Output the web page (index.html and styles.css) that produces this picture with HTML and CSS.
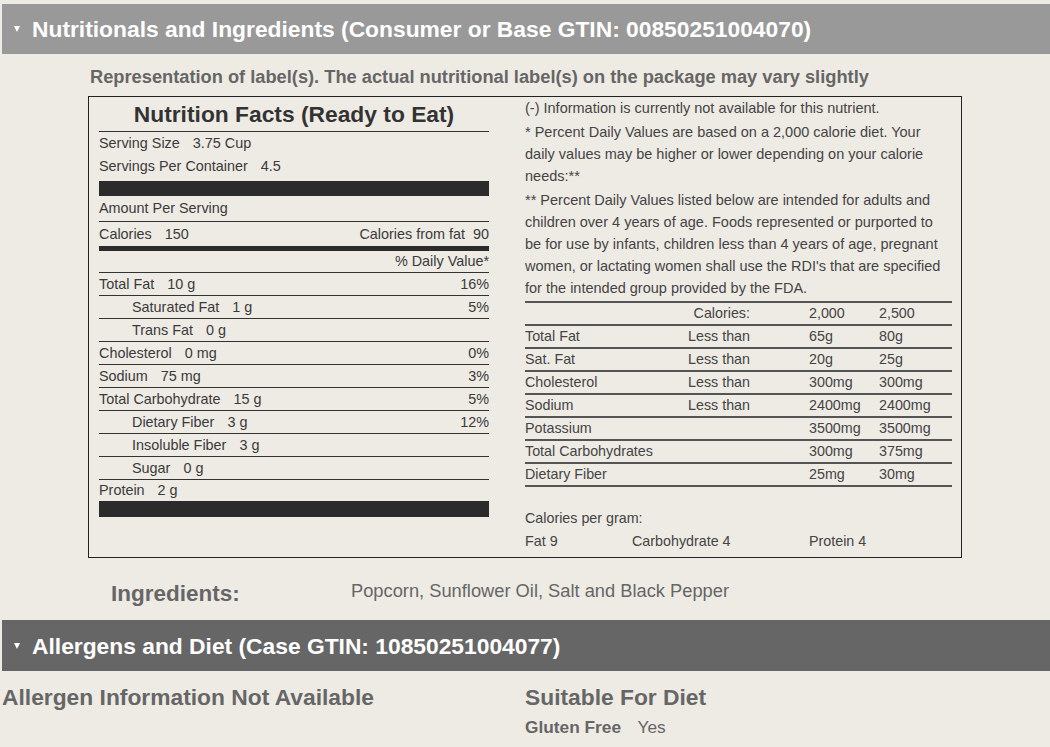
FILE: index.html
```html
<!DOCTYPE html>
<html lang="en">
<head>
<meta charset="utf-8">
<title>Nutritionals and Ingredients</title>
<link rel="stylesheet" href="styles.css">
</head>
<body>
<section class="panel">
  <h2 class="bar bar-light"><span class="tri"></span>Nutritionals and Ingredients (Consumer or Base GTIN: 00850251004070)</h2>
  <p class="note">Representation of label(s). The actual nutritional label(s) on the package may vary slightly</p>
  <div class="label-box">
    <div class="facts">
      <div class="facts-title">Nutrition Facts (Ready to Eat)</div>
      <div class="fr h23"><span>Serving Size <span class="v">3.75 Cup</span></span></div>
      <div class="fr h23"><span>Servings Per Container <span class="v">4.5</span></span></div>
      <div class="bar-thick"></div>
      <div class="fr amount">Amount Per Serving</div>
      <div class="fr cal"><span>Calories <span class="v">150</span></span><span>Calories from fat <span class="v2">90</span></span></div>
      <div class="bar-thin"></div>
      <div class="fr dv"><span></span><span>% Daily Value*</span></div>
      <div class="fr nut"><span>Total Fat <span class="v">10 g</span></span><span>16%</span></div>
      <div class="fr nut ind"><span>Saturated Fat <span class="v">1 g</span></span><span>5%</span></div>
      <div class="fr nut ind"><span>Trans Fat <span class="v">0 g</span></span><span></span></div>
      <div class="fr nut"><span>Cholesterol <span class="v">0 mg</span></span><span>0%</span></div>
      <div class="fr nut"><span>Sodium <span class="v">75 mg</span></span><span>3%</span></div>
      <div class="fr nut"><span>Total Carbohydrate <span class="v">15 g</span></span><span>5%</span></div>
      <div class="fr nut ind"><span>Dietary Fiber <span class="v">3 g</span></span><span>12%</span></div>
      <div class="fr nut ind"><span>Insoluble Fiber <span class="v">3 g</span></span><span></span></div>
      <div class="fr nut ind"><span>Sugar <span class="v">0 g</span></span><span></span></div>
      <div class="fr protein"><span>Protein <span class="v">2 g</span></span></div>
      <div class="bar-bottom"></div>
    </div>
    <div class="info">
      <p>(-) Information is currently not available for this nutrient.</p>
      <p>* Percent Daily Values are based on a 2,000 calorie diet. Your daily values may be higher or lower depending on your calorie needs:**</p>
      <p>** Percent Daily Values listed below are intended for adults and children over 4 years of age. Foods represented or purported to be for use by infants, children less than 4 years of age, pregnant women, or lactating women shall use the RDI's that are specified for the intended group provided by the FDA.</p>
      <div class="dv-table">
        <div class="dv-row"><span></span><span class="c2">Calories:</span><span class="c3">2,000</span><span>2,500</span></div>
        <div class="dv-row"><span>Total Fat</span><span class="c2">Less than</span><span class="c3">65g</span><span>80g</span></div>
        <div class="dv-row"><span>Sat. Fat</span><span class="c2">Less than</span><span class="c3">20g</span><span>25g</span></div>
        <div class="dv-row"><span>Cholesterol</span><span class="c2">Less than</span><span class="c3">300mg</span><span>300mg</span></div>
        <div class="dv-row"><span>Sodium</span><span class="c2">Less than</span><span class="c3">2400mg</span><span>2400mg</span></div>
        <div class="dv-row"><span>Potassium</span><span class="c2"></span><span class="c3">3500mg</span><span>3500mg</span></div>
        <div class="dv-row"><span>Total Carbohydrates</span><span class="c2"></span><span class="c3">300mg</span><span>375mg</span></div>
        <div class="dv-row"><span>Dietary Fiber</span><span class="c2"></span><span class="c3">25mg</span><span>30mg</span></div>
      </div>
      <div class="per-gram">Calories per gram:</div>
      <div class="per-gram-row"><span>Fat 9</span><span>Carbohydrate 4</span><span>Protein 4</span></div>
    </div>
  </div>
  <div class="ingredients">
    <span class="ing-title">Ingredients:</span>
    <span class="ing-text">Popcorn, Sunflower Oil, Salt and Black Pepper</span>
  </div>
</section>
<section class="panel">
  <h2 class="bar bar-dark"><span class="tri"></span>Allergens and Diet (Case GTIN: 10850251004077)</h2>
  <div class="diet-row">
    <div class="allergen">Allergen Information Not Available</div>
    <div class="diet">
      <h3>Suitable For Diet</h3>
      <p><b>Gluten Free</b> Yes</p>
    </div>
  </div>
</section>
</body>
</html>
```
FILE: styles.css
```css
* {
  box-sizing: border-box;
  margin: 0;
  padding: 0;
}

html,
body {
  background: #eeebe5;
}

body {
  font-family: "Liberation Sans", Arial, Helvetica, sans-serif;
  color: #444;
  padding: 4px 0 0 2px;
}

.bar {
  display: flex;
  align-items: center;
  height: 50px;
  padding-left: 12px;
  color: #fff;
  font-size: 22.8px;
  font-weight: bold;
  line-height: 50px;
  white-space: nowrap;
}

.bar-light {
  background: #999;
}

.bar-dark {
  background: #666;
  height: 51px;
  margin-top: 13px;
}

.tri {
  width: 0;
  height: 0;
  border-left: 3.5px solid transparent;
  border-right: 3.5px solid transparent;
  border-top: 6px solid #fff;
  margin-right: 12px;
}

.note {
  margin: 13px 0 0 88px;
  font-size: 18.25px;
  font-weight: bold;
  line-height: 20px;
  color: #666;
}

.label-box {
  display: grid;
  grid-template-columns: 390px 1fr;
  column-gap: 36px;
  width: 874px;
  margin: 9px 0 0 86px;
  padding: 0 9px 4px 10px;
  border: 1px solid #222;
}

/* Nutrition facts column */
.facts {
  font-size: 14.4px;
  color: #3a3a3a;
}

.facts-title {
  height: 35px;
  line-height: 34px;
  border-bottom: 1px solid #333;
  text-align: center;
  font-size: 22.8px;
  font-weight: bold;
  color: #333;
}

.fr {
  display: flex;
  justify-content: space-between;
  white-space: nowrap;
}

.fr .v {
  margin-left: 9px;
}

.fr .v2 {
  margin-left: 4px;
}

.h23 {
  height: 23px;
  line-height: 23px;
}

.bar-thick {
  height: 15px;
  margin-top: 3px;
  background: #2b2b2b;
}

.amount {
  height: 26px;
  line-height: 25px;
  border-bottom: 1px solid #333;
}

.cal {
  height: 24px;
  line-height: 24px;
}

.bar-thin {
  height: 5px;
  background: #2b2b2b;
}

.dv {
  height: 22px;
  line-height: 21px;
  border-bottom: 1px solid #333;
}

.nut {
  height: 23px;
  line-height: 22px;
  border-bottom: 1px solid #333;
}

.ind {
  padding-left: 33px;
}

.protein {
  height: 21px;
  line-height: 21px;
}

.bar-bottom {
  height: 16px;
  background: #2b2b2b;
}

/* Info column */
.info {
  font-size: 14.5px;
  color: #444;
}

.info p {
  line-height: 22px;
  margin-bottom: 2px;
}

.dv-table {
  font-size: 14.3px;
  border-top: 2px solid #555;
}

.dv-row {
  display: grid;
  grid-template-columns: 163px 62px 129px 1fr;
  height: 23px;
  line-height: 21px;
  border-bottom: 2px solid #555;
  white-space: nowrap;
}

.dv-row .c2 {
  text-align: right;
}

.dv-row .c3 {
  padding-left: 59px;
}

.per-gram {
  margin-top: 20px;
  line-height: 23px;
  font-size: 14.3px;
}

.per-gram-row {
  display: grid;
  grid-template-columns: 107px 177px 1fr;
  line-height: 23px;
  font-size: 14.3px;
}

/* Ingredients */
.ingredients {
  display: flex;
  align-items: flex-start;
  margin: 23px 0 0 109px;
  color: #666;
}

.ing-title {
  width: 240px;
  font-size: 22.5px;
  font-weight: bold;
  line-height: 26px;
}

.ing-text {
  font-size: 18.3px;
  line-height: 20px;
}

/* Allergens and diet */
.diet-row {
  display: grid;
  grid-template-columns: 523px 1fr;
  margin-top: 12px;
  color: #666;
}

.allergen,
.diet h3 {
  font-size: 22.8px;
  font-weight: bold;
  line-height: 28px;
}

.diet p {
  margin-top: 5px;
  font-size: 17.3px;
  line-height: 22px;
}

.diet p b {
  margin-right: 12px;
}
```
